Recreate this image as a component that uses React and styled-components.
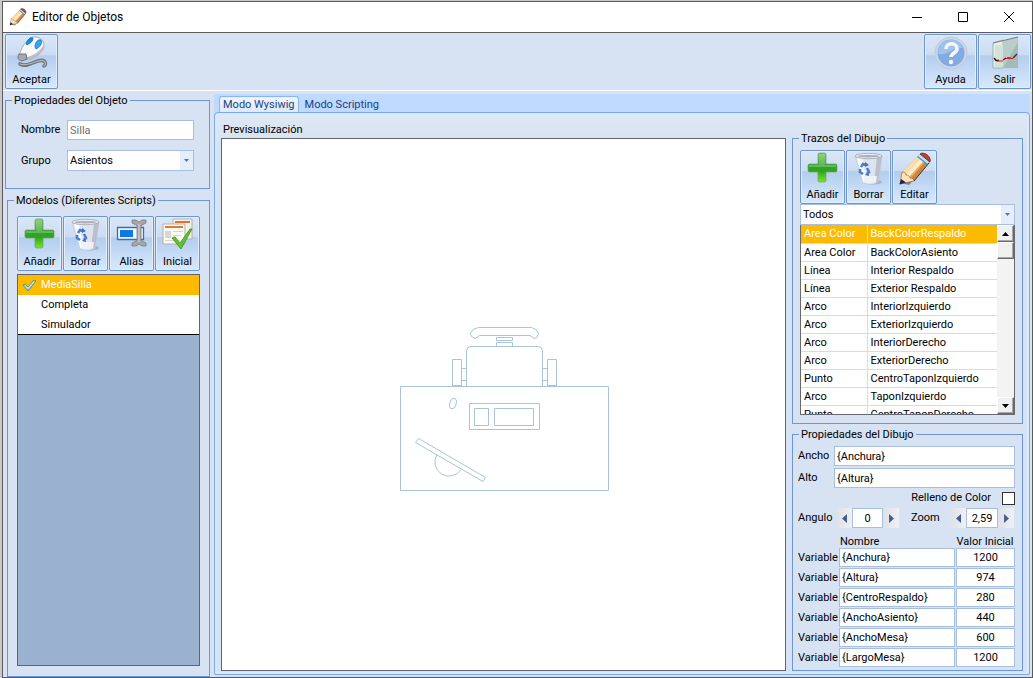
import React from "react";
import styled, { createGlobalStyle, css } from "styled-components";

const line = "#6f96d4";
const softLine = "#a7bfe3";
const face = "#d7e3f3";

const GlobalStyle = createGlobalStyle`
  * { box-sizing: border-box; }
  body {
    margin: 0;
    background: #c9c9c9;
    color: #000;
    font: 400 11px/14px Roboto, "Liberation Sans", sans-serif;
  }
  button, input, select { font: inherit; color: inherit; margin: 0; border-radius: 0; }
`;

const Desktop = styled.div`
  min-height: 100vh;
  padding: 1px 0 0 2px;
  display: flex;
`;

const Window = styled.div`
  flex: 1;
  display: flex;
  flex-direction: column;
  border: 1px solid #5a5a5a;
  background: ${face};
`;

const TitleBar = styled.header`
  height: 31px;
  display: flex;
  align-items: center;
  padding: 0 0 1px 6px;
  background: #fff;
  border-bottom: 1px solid #5c5c60;
`;

const Title = styled.h1`
  flex: 1;
  margin: 0;
  padding-left: 5px;
  font: 400 12px/16px Roboto, sans-serif;
`;

const CaptionButton = styled.button`
  width: 46px;
  height: 28px;
  padding: 0;
  border: 0;
  background: none;
  display: grid;
  place-items: center;
`;

const Toolbar = styled.div`
  display: flex;
  gap: 1px;
  padding: 1px 1px 1px 2px;
  border-bottom: 1px solid #fff;
`;

const Spacer = styled.div`
  flex: 1;
`;

const ButtonRow = styled.div`
  display: flex;
  gap: 1px;
`;

const Tool = styled.button`
  width: ${(p) => (p.$wide ? 53 : 45)}px;
  height: ${(p) => p.$height || 55}px;
  padding: 1px 0 2px;
  display: flex;
  flex-direction: column;
  align-items: center;
  justify-content: space-between;
  border: 1px solid ${line};
  border-radius: 2px;
  box-shadow: inset 0 0 0 1px #e3eefc;
  background: linear-gradient(#dae6f7 0%, #cbdcf2 38%, #b4cdee 39%, #c0d7f4 62%, #d8e9fd 100%);
  line-height: 13px;
`;

const Body = styled.div`
  flex: 1;
  display: flex;
`;

const Sidebar = styled.aside`
  width: 211px;
  flex: none;
  padding: 3px 4px 0 2px;
  display: flex;
  flex-direction: column;
  gap: 5px;
`;

const Group = styled.fieldset`
  margin: 0;
  min-width: 0;
  border: 1px solid ${line};
  padding: 0;
  display: flex;
  flex-direction: column;
  ${(p) => p.$grow && css`flex: 1;`}
  ${(p) => p.$indent && css`margin-left: 2px;`}
`;

const GroupBody = styled.div`
  flex: 1;
  display: flex;
  flex-direction: column;
  padding: ${(p) => p.$pad};
`;

const Legend = styled.legend`
  height: 13px;
  line-height: 13px;
  margin-left: 6px;
  padding: 0 2px;
`;

const FormRow = styled.div`
  display: grid;
  grid-template-columns: 46px 1fr;
  align-items: center;
  margin-bottom: 10px;
`;

const Label = styled.label`
  white-space: nowrap;
`;

const TextBox = styled.input`
  width: 100%;
  min-width: 0;
  height: ${(p) => p.$height || 20}px;
  padding: 0 2px;
  border: 1px solid ${softLine};
  background: #fff;
  outline: 0;
  text-align: ${(p) => (p.$center ? "center" : "left")};
  &:disabled { color: #6d6d6d; }
`;

const Combo = styled.div`
  display: grid;
  grid-template-columns: 1fr 14px;
`;

const Select = styled.select`
  grid-area: 1 / 1 / 2 / 3;
  appearance: none;
  height: ${(p) => p.$height}px;
  padding: 0 16px 0 2px;
  border: 1px solid ${softLine};
  background: #fff;
  outline: 0;
`;

const ComboArrow = styled.span`
  grid-area: 1 / 2;
  margin: 1px 1px 1px 0;
  pointer-events: none;
  background: #e6eefa;
  display: grid;
  place-items: center;
`;

const ModelList = styled.ul`
  flex: 1;
  margin: 3px 0 0;
  padding: 0;
  list-style: none;
  border: 1px solid #5f6570;
  background: #9ab1cf;
`;

const Model = styled.li`
  height: 20px;
  display: grid;
  grid-template-columns: 23px 1fr;
  align-items: center;
  background: ${(p) => (p.$selected ? "#fcbb00" : "#fff")};
  color: ${(p) => (p.$selected ? "#fff" : "#000")};
  &:last-child { border-bottom: 1px solid #000; }
`;

const Mark = styled.span`
  display: grid;
  place-items: center;
`;

const TabArea = styled.main`
  flex: 1;
  min-width: 0;
  margin: 3px 2px 2px 0;
  display: flex;
  flex-direction: column;
  background: #bfd9ff;
`;

const TabStrip = styled.div`
  height: 18px;
  display: flex;
  align-items: flex-end;
  padding-left: 5px;
`;

const Tab = styled.button`
  height: ${(p) => (p.$active ? 17 : 16)}px;
  margin-bottom: ${(p) => (p.$active ? -1 : 0)}px;
  padding: 0 5px;
  border: 1px solid transparent;
  border-bottom: 0;
  border-radius: 3px 3px 0 0;
  background: none;
  color: #15428b;
  line-height: 14px;
  ${(p) => p.$active && css`
    padding: 0 3px;
    border-color: #8db5ee;
    box-shadow: inset 0 1px 0 #d4f5ff, inset -1px 0 0 #d4f5ff;
    background: linear-gradient(#f0f6fc, #dfe8f5);
  `}
`;

const Panel = styled.section`
  flex: 1;
  display: flex;
  gap: 6px;
  padding: 0 6px 3px;
  border: 1px solid #7ba8e8;
  border-radius: 4px 4px 2px 2px;
  box-shadow: inset 0 0 0 2px #d6ebff;
  background: linear-gradient(#e0e8f3 0, ${face} 30px);
`;

const PreviewColumn = styled.div`
  flex: 1;
  min-width: 0;
  display: flex;
  flex-direction: column;
  padding-top: 10px;
`;

const PreviewTitle = styled.h2`
  margin: 0;
  padding: 0 2px 1px;
  font: inherit;
`;

const Preview = styled.div`
  flex: 1;
  border: 1px solid #62666c;
  background: #fff;
  display: grid;
  place-items: center;
`;

const Inspector = styled.div`
  width: 231px;
  flex: none;
  display: flex;
  flex-direction: column;
  gap: 4px;
  padding-top: 19px;
`;

const StrokeList = styled.div`
  flex: 1 1 0;
  min-height: 189px;
  display: flex;
  overflow: hidden;
  border: 1px solid #666a70;
  border-top: 0;
  background: #fff;
`;

const StrokeView = styled.div`
  flex: 1;
  height: 0;
  min-height: 100%;
  overflow: hidden;
`;

const StrokeTable = styled.table`
  width: 100%;
  border-collapse: collapse;
  table-layout: fixed;
`;

const TypeCol = styled.col`
  width: 66px;
`;

const StrokeRow = styled.tr`
  height: 18px;
  background: ${(p) => (p.$selected ? "#fcbb00" : "#fff")};
  color: ${(p) => (p.$selected ? "#fff" : "#000")};
`;

const Cell = styled.td`
  height: 18px;
  padding: 0 3px;
  line-height: 17px;
  white-space: nowrap;
  border-bottom: 1px solid #cfdfe4;
  & + & { border-left: 1px solid #cfdfe4; }
`;

const ScrollTrack = styled.div`
  width: 17px;
  display: flex;
  flex-direction: column;
  background: #f3f3f3;
`;

const ScrollPart = styled.button`
  height: 17px;
  padding: 0;
  display: grid;
  place-items: center;
  border: 1px solid;
  border-color: #fff #6b6b6b #6b6b6b #fff;
  box-shadow: inset -1px -1px 0 #a8a8a8;
  background: #f0f0f0;
`;

const PropRow = styled.div`
  display: grid;
  grid-template-columns: 36px 1fr;
  align-items: center;
  height: 20px;
  margin-bottom: 2px;
`;

const CheckRow = styled.div`
  height: 16px;
  display: flex;
  justify-content: flex-end;
  align-items: center;
  gap: 11px;
`;

const CheckBox = styled.input`
  appearance: none;
  width: 13px;
  height: 13px;
  border: 1px solid #333;
  background: #fff;
`;

const SpinRow = styled.div`
  display: grid;
  grid-template-columns: 38px 63px 12px 39px 64px;
  align-items: center;
  margin-top: 2px;
`;

const Spinner = styled.div`
  display: grid;
  grid-template-columns: 16px 1fr 16px;
`;

const SpinButton = styled.button`
  padding: 0;
  border: 0;
  background: linear-gradient(90deg, #dde1e8, #eef0f4);
  display: grid;
  place-items: center;
`;

const VariableTable = styled.table`
  width: 100%;
  margin-top: 7px;
  border-collapse: collapse;
  table-layout: fixed;
  th { font-weight: inherit; height: 13px; line-height: 13px; padding: 0; white-space: nowrap; }
  td { height: 20px; padding: 0 0 1px; }
  td + td { padding-left: 1px; }
`;

const VarCol = styled.col`
  width: ${(p) => p.$w}px;
`;

const NameHead = styled.th`
  text-align: left;
  text-indent: 2px;
`;

const Glyph = ({ d, w = 8, h = 8, fill = "#000" }) => (
  <svg width={w} height={h} viewBox={`0 0 ${w} ${h}`} aria-hidden="true"><path d={d} fill={fill} /></svg>
);

const DropGlyph = () => <Glyph w={5} h={3} d="M0 0h5L2.500 3z" fill="#4f74ae" />;

const PencilIcon = ({ size = 34 }) => (
  <svg width={size} height={size} viewBox="0 0 34 34" aria-hidden="true">
    <path d="M3 31l8 2 21-23-2-3L10 29z" fill="#4d4f54" opacity=".6" />
    <path d="M4 20L20 4l10 8-14 17z" fill="#f0a95c" />
    <path d="M4 20L20 4l3 2L8 22z" fill="#fddcab" />
    <path d="M13 26L27 10l3 2-14 17z" fill="#c98545" />
    <path d="M8 22L23 6l3 2.500L11 25z" fill="#ffecc9" />
    <path d="M4 20c3 0 4 1 4 3 2 0 4 1 4 3 2 0 4 1 4 3L2 32z" fill="#fde0b8" stroke="#8d5a2b" strokeWidth=".6" />
    <path d="M3 27l5 3.500L1.500 32.500z" fill="#17265c" />
    <path d="M19 5l4-4 9 8-3 4z" fill="#3a9ccb" />
    <path d="M20 4l2-2 9 8-1 2z" fill="#bfe6f5" />
    <path d="M22 2c3-3 12 2 10 8z" fill="#c3402c" stroke="#5f2620" strokeWidth=".7" />
    <path d="M16 29L31 11" stroke="#513012" strokeWidth="1" fill="none" />
  </svg>
);

const MouseIcon = () => (
  <svg width="34" height="33" viewBox="0 0 34 33" aria-hidden="true">
    <path d="M5 28c5 3 10 0 15-2s9-2 10 0 0 4-1 4" fill="none" stroke="#70757a" strokeWidth="3.600" strokeLinecap="round" />
    <path d="M5 28c5 2 10 0 15-2s9-2 10 0 0 4-1 4" fill="none" stroke="#b4b8bb" strokeWidth="1.200" strokeLinecap="round" />
    <path d="M4 20C6 12 11 4 17 1c7-1 12 3 12 8 0 7-8 12-13 14-6 1-12 1-12-3z" fill="#f8f8f8" stroke="#9a9da2" strokeWidth=".8" />
    <path d="M29 9c0 7-8 12-13 14-5 1-9 1-11-1 10 0 19-5 24-13z" fill="#b9bdc3" />
    <path d="M11 8c1-4 4-7 7-6 0 3-2 5-6 7z" fill="#168eea" stroke="#0969be" strokeWidth=".7" />
    <path d="M20 11c0-5 3-8 6-7 2 3-1 7-5 9z" fill="#35a6f8" stroke="#0969be" strokeWidth=".7" />
    <path d="M4 18l7 0 1 5-5 2c-4-1-5-3-3-7z" fill="#a5a9ad" stroke="#6f7479" />
  </svg>
);

const HelpIcon = () => (
  <svg width="34" height="36" viewBox="0 0 34 36" aria-hidden="true">
    <circle cx="17" cy="17" r="16" fill="#cbd7e8" stroke="#bccae0" />
    <circle cx="17" cy="17" r="13.500" fill="#82acdf" />
    <path d="M4 18a13 13 0 0 1 25-6C18 11 15 20 4 18z" fill="#a0c2eb" />
    <path d="M12 13c0-7 11-7 11 0 0 4-6 4-6 8" fill="none" stroke="#f5f7fb" strokeWidth="3.600" />
    <circle cx="17" cy="26" r="2.200" fill="#f5f7fb" />
  </svg>
);

const ExitIcon = () => (
  <svg width="28" height="34" viewBox="0 0 28 34" aria-hidden="true">
    <path d="M2 7l10-3v28H2z" fill="#e6efe9" stroke="#8ba69e" strokeWidth=".8" />
    <path d="M4 9h8v22H4z" fill="#d3e2d9" />
    <path d="M12 5h4v27h-4z" fill="#fbfdfc" />
    <path d="M12 5l15-4v31H12z" fill="#a3bcb7" />
    <path d="M12 5l15-4v5L12 32z" fill="#b9cec8" />
    <path d="M2 7L27 1" stroke="#6f827e" />
    <path d="M3 22l2 2.500h3" fill="none" stroke="#111" strokeWidth="1.300" />
    <path d="M6 25h6M13 22.500h9" stroke="#df1e25" strokeWidth="1.200" />
    <path d="M12 24l3-2M22 22l4-4" fill="none" stroke="#402c45" strokeWidth="1.400" />
    <path d="M16 21.500h4" stroke="#704be8" />
  </svg>
);

const AddIcon = () => (
  <svg width="32" height="32" viewBox="0 0 32 32" aria-hidden="true">
    <defs>
      <linearGradient id="leaf" x1="0" y1="0" x2="0" y2="1">
        <stop offset="0" stopColor="#86c96c" /><stop offset=".4" stopColor="#3a9f3a" />
        <stop offset=".62" stopColor="#2ba51d" /><stop offset="1" stopColor="#80e12a" />
      </linearGradient>
    </defs>
    <path d="M12 1h6l1 1v10h10l1 1v6l-1 1h-10v9l-1 1h-6l-1-1v-9H2l-1-1v-6l1-1h9V2z" fill="url(#leaf)" stroke="#63ab55" strokeWidth=".7" />
    <path d="M12 2h6v11h11v2H2v-2h10z" fill="#a5df90" opacity=".4" />
  </svg>
);

const BinIcon = () => (
  <svg width="32" height="34" viewBox="0 0 32 34" aria-hidden="true">
    <ellipse cx="20" cy="30" rx="9" ry="2.500" fill="#909090" opacity=".5" />
    <path d="M2 4h27l-4 26c-3 2.500-12 2.500-15 0z" fill="#dde4f0" stroke="#c2c8d1" strokeWidth=".7" />
    <path d="M24 5h5l-4 25-4 1z" fill="#b9c0cc" />
    <path d="M4 6l6 24 4 1L9 6z" fill="#f7faff" />
    <path d="M11 24h13l-1 6c-3 2-9 2-12 0z" fill="#eef1f6" />
    <ellipse cx="15.500" cy="4" rx="13.500" ry="2.700" fill="#e9edf2" stroke="#9da4ad" strokeWidth=".8" />
    <ellipse cx="15.500" cy="4.200" rx="11" ry="1.300" fill="#a9b1bd" />
    <path d="M8 15l2-3 3 1M14 16l2 4-2 2M10 22l-3-2 0-3" fill="none" stroke="#4a7fd0" strokeWidth="2.600" />
    <path d="M12 10l4 3-4 2zM16 24l-4-1 3-3z" fill="#3f70c0" />
  </svg>
);

const AliasIcon = () => (
  <svg width="32" height="32" viewBox="0 0 32 32" aria-hidden="true">
    <path d="M1.500 9.500h26v12h-26z" fill="#f4f8ff" stroke="#3c6db0" strokeWidth="1.300" />
    <path d="M4 12h13v7H4z" fill="#087be8" />
    <path d="M16 2h4l3 2 3-2h4v3l-5 2.500v15l5 2.500v3h-4l-3-2-3 2h-4v-3l5-2.500v-15L16 5z" fill="#a6a6a6" stroke="#7c7e80" strokeWidth=".8" />
    <path d="M23 6v18" stroke="#cfcfcf" strokeWidth="1.200" />
  </svg>
);

const InitialIcon = () => (
  <svg width="32" height="32" viewBox="0 0 32 32" aria-hidden="true">
    <path d="M11 1h19v20H11z" fill="#f6f3ed" stroke="#b5afa6" />
    <path d="M13 3h15v2H13z" fill="#d67635" />
    <path d="M1 6h22v20H1z" fill="#fbfaf6" stroke="#b5afa6" />
    <path d="M3 8h18v2H3z" fill="#dd7b32" />
    <path d="M3 13h6v7H3zM11 13h10v1H11zM11 17h8v1H11zM3 22h15v1H3z" fill="#d6d6d2" />
    <path d="M10 20l3-1 5 6L28 11l2 0-11 20z" fill="#62c52b" stroke="#3e8b25" strokeWidth=".8" />
  </svg>
);

const TickIcon = () => (
  <svg width="15" height="14" viewBox="0 0 15 14" aria-hidden="true">
    <path d="M1 7l2-1 3 3 6-7 2 1-8 10z" fill="#8fd0e4" stroke="#567d7c" strokeWidth=".8" />
    <path d="M3 7.500l3 3 6-7" stroke="#d3f3fb" fill="none" />
  </svg>
);

const ChairDrawing = () => (
  <svg width="212" height="172" viewBox="398 319 212 172" fill="none" stroke="#a9c4d8" role="img" aria-label="Silla">
    <path d="M478.500 327.500H531.500L536 329.500L538.500 333.500L537 337.500L534 338.500L530 335.500H479.500L475 338.500L471.500 336.500L470.500 333.500L473 329.500Z" />
    <path d="M496.500 337.500h16v3h-16zM496.500 342.500h16v4h-16z" />
    <path d="M466.500 386.500V350.500l1.500-3 2.500-1h68l2.500 1 1.500 3V386.500" />
    <path d="M452.500 359.500h9v26h-9zM547.500 359.500h9v26h-9zM461.500 368.500h5M461.500 380.500h5M542.500 368.500h5M542.500 380.500h5" />
    <path d="M400.500 386.500h208v104h-208z" />
    <path d="M469.500 403.500h70v26h-70zM474.500 408.500h14v17h-14zM494.500 408.500h39v17h-39z" />
    <ellipse cx="453" cy="403.500" rx="3.200" ry="5.300" transform="rotate(18 453 403.500)" />
    <path d="M418.500 438.500L485.500 477.500L483 481.500L415.500 442.500Z" />
    <path d="M437 454.500A14 14 0 0 0 461 469.500" />
  </svg>
);

const strokes = [
  ["Area Color", "BackColorRespaldo"], ["Area Color", "BackColorAsiento"],
  ["Línea", "Interior Respaldo"], ["Línea", "Exterior Respaldo"],
  ["Arco", "InteriorIzquierdo"], ["Arco", "ExteriorIzquierdo"],
  ["Arco", "InteriorDerecho"], ["Arco", "ExteriorDerecho"],
  ["Punto", "CentroTaponIzquierdo"], ["Arco", "TaponIzquierdo"],
  ["Punto", "CentroTaponDerecho"],
];

const variables = [
  ["{Anchura}", "1200"], ["{Altura}", "974"], ["{CentroRespaldo}", "280"],
  ["{AnchoAsiento}", "440"], ["{AnchoMesa}", "600"], ["{LargoMesa}", "1200"],
];

const NumberSpinner = ({ id, value }) => (
  <Spinner>
    <SpinButton aria-label="Menos"><Glyph w={5} h={9} d="M5 0v9L0 4.500z" fill="#465e8f" /></SpinButton>
    <TextBox id={id} defaultValue={value} $center />
    <SpinButton aria-label="Más"><Glyph w={5} h={9} d="M0 0v9l5-4.500z" fill="#465e8f" /></SpinButton>
  </Spinner>
);

export default function App() {
  return (
    <Desktop>
      <GlobalStyle />
      <Window>
        <TitleBar>
          <PencilIcon size={18} />
          <Title>Editor de Objetos</Title>
          <CaptionButton aria-label="Minimizar"><svg width="10" height="10"><path d="M0 5.500h10" stroke="#000" /></svg></CaptionButton>
          <CaptionButton aria-label="Maximizar"><svg width="10" height="10"><path d="M.5.5h9v9h-9z" stroke="#000" fill="none" /></svg></CaptionButton>
          <CaptionButton aria-label="Cerrar"><svg width="10" height="10"><path d="M0 0l10 10M10 0L0 10" stroke="#000" /></svg></CaptionButton>
        </TitleBar>

        <Toolbar>
          <Tool $wide><MouseIcon />Aceptar</Tool>
          <Spacer />
          <Tool $wide><HelpIcon />Ayuda</Tool>
          <Tool $wide><ExitIcon />Salir</Tool>
        </Toolbar>

        <Body>
          <Sidebar>
            <Group>
              <Legend>Propiedades del Objeto</Legend>
              <GroupBody $pad="13px 15px 7px">
                <FormRow>
                  <Label htmlFor="nombre">Nombre</Label>
                  <TextBox id="nombre" defaultValue="Silla" disabled />
                </FormRow>
                <FormRow>
                  <Label htmlFor="grupo">Grupo</Label>
                  <Combo>
                    <Select id="grupo" $height={21}><option>Asientos</option></Select>
                    <ComboArrow><DropGlyph /></ComboArrow>
                  </Combo>
                </FormRow>
              </GroupBody>
            </Group>

            <Group $grow $indent>
              <Legend>Modelos (Diferentes Scripts)</Legend>
              <GroupBody $pad="9px 9px 10px">
                <ButtonRow>
                  <Tool><AddIcon />Añadir</Tool>
                  <Tool><BinIcon />Borrar</Tool>
                  <Tool><AliasIcon />Alias</Tool>
                  <Tool><InitialIcon />Inicial</Tool>
                </ButtonRow>
                <ModelList>
                  <Model $selected><Mark><TickIcon /></Mark>MediaSilla</Model>
                  <Model><Mark />Completa</Model>
                  <Model><Mark />Simulador</Model>
                </ModelList>
              </GroupBody>
            </Group>
          </Sidebar>

          <TabArea>
            <TabStrip role="tablist">
              <Tab role="tab" aria-selected="true" $active>Modo Wysiwig</Tab>
              <Tab role="tab" aria-selected="false">Modo Scripting</Tab>
            </TabStrip>
            <Panel>
              <PreviewColumn>
                <PreviewTitle>Previsualización</PreviewTitle>
                <Preview><ChairDrawing /></Preview>
              </PreviewColumn>

              <Inspector>
                <Group $grow>
                  <Legend>Trazos del Dibujo</Legend>
                  <GroupBody $pad="5px 7px 8px">
                    <ButtonRow>
                      <Tool $height={54}><AddIcon />Añadir</Tool>
                      <Tool $height={54}><BinIcon />Borrar</Tool>
                      <Tool $height={54}><PencilIcon />Editar</Tool>
                    </ButtonRow>
                    <Combo>
                      <Select $height={21} aria-label="Filtro"><option>Todos</option></Select>
                      <ComboArrow><DropGlyph /></ComboArrow>
                    </Combo>
                    <StrokeList>
                      <StrokeView>
                        <StrokeTable>
                          <colgroup><TypeCol /><col /></colgroup>
                          <tbody>
                            {strokes.map(([type, name], i) => (
                              <StrokeRow key={name} $selected={i === 0}>
                                <Cell>{type}</Cell>
                                <Cell>{name}</Cell>
                              </StrokeRow>
                            ))}
                          </tbody>
                        </StrokeTable>
                      </StrokeView>
                      <ScrollTrack>
                        <ScrollPart aria-label="Subir"><Glyph w={7} h={4} d="M0 4h7L3.500 0z" /></ScrollPart>
                        <ScrollPart aria-label="Desplazar" />
                        <Spacer />
                        <ScrollPart aria-label="Bajar"><Glyph w={7} h={4} d="M0 0h7L3.500 4z" /></ScrollPart>
                      </ScrollTrack>
                    </StrokeList>
                  </GroupBody>
                </Group>

                <Group>
                  <Legend>Propiedades del Dibujo</Legend>
                  <GroupBody $pad="5px 7px 2px 5px">
                    <PropRow>
                      <Label htmlFor="ancho">Ancho</Label>
                      <TextBox id="ancho" defaultValue="{Anchura}" />
                    </PropRow>
                    <PropRow>
                      <Label htmlFor="alto">Alto</Label>
                      <TextBox id="alto" defaultValue="{Altura}" />
                    </PropRow>
                    <CheckRow>
                      <Label htmlFor="relleno">Relleno de Color</Label>
                      <CheckBox id="relleno" type="checkbox" />
                    </CheckRow>
                    <SpinRow>
                      <Label htmlFor="angulo">Angulo</Label>
                      <NumberSpinner id="angulo" value="0" />
                      <span />
                      <Label htmlFor="zoom">Zoom</Label>
                      <NumberSpinner id="zoom" value="2,59" />
                    </SpinRow>
                    <VariableTable>
                      <colgroup><VarCol $w={40} /><col /><VarCol $w={60} /></colgroup>
                      <thead>
                        <tr><th /><NameHead>Nombre</NameHead><th>Valor Inicial</th></tr>
                      </thead>
                      <tbody>
                        {variables.map(([name, value]) => (
                          <tr key={name}>
                            <td><Label htmlFor={name}>Variable</Label></td>
                            <td><TextBox id={name} defaultValue={name} $height={19} /></td>
                            <td><TextBox aria-label={`Valor de ${name}`} defaultValue={value} $height={19} $center /></td>
                          </tr>
                        ))}
                      </tbody>
                    </VariableTable>
                  </GroupBody>
                </Group>
              </Inspector>
            </Panel>
          </TabArea>
        </Body>
      </Window>
    </Desktop>
  );
}
